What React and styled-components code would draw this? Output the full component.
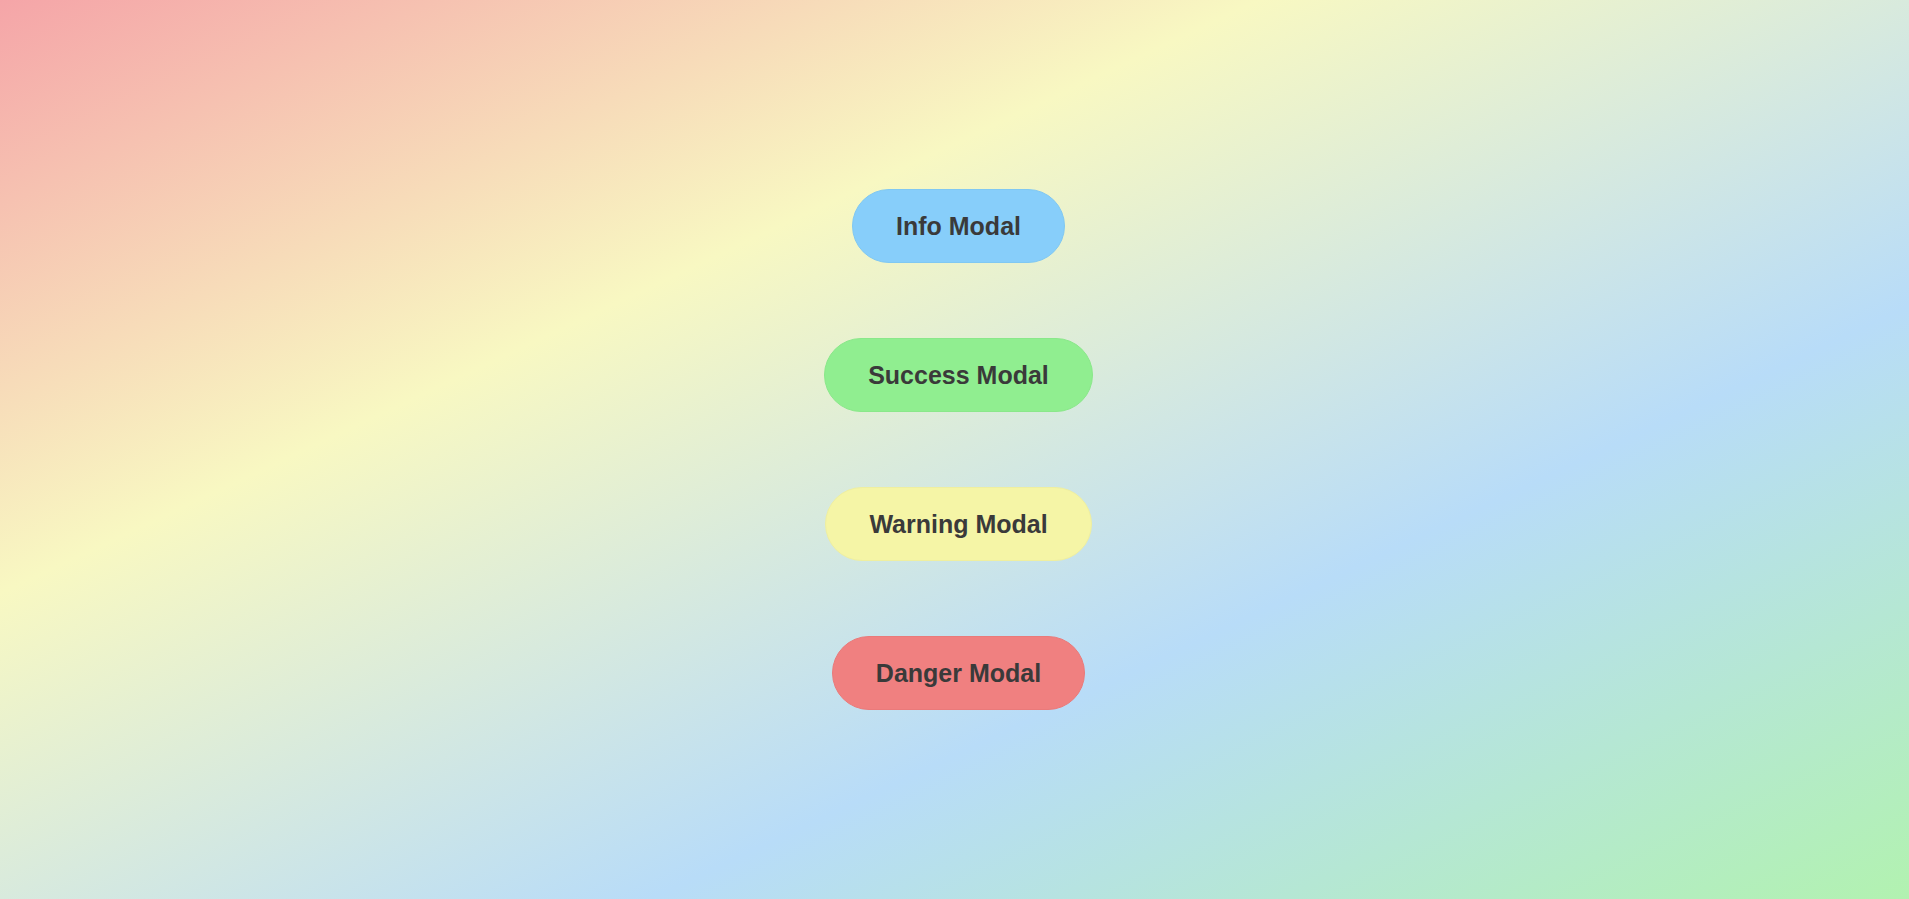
import React from "react"
import styled, { createGlobalStyle } from "styled-components"

const GlobalStyle = createGlobalStyle`
  html, body {
    margin: 0;
    padding: 0;
    height: 100%;
  }
  body {
    font-family: "Liberation Sans", Arial, sans-serif;
  }
`

const buttons = [
  { label: "Info Modal", color: "#87cefa", edge: "#80c8f2" },
  { label: "Success Modal", color: "#90ee90", edge: "#8ae88a" },
  { label: "Warning Modal", color: "#f5f5a6", edge: "#efefa0" },
  { label: "Danger Modal", color: "#f08080", edge: "#ea7a7a" },
]

const App = () => (
  <>
    <GlobalStyle />
    <Page>
      <ButtonStack>
        {buttons.map(b => (
          <ModalButton key={b.label} $color={b.color} $edge={b.edge}>
            {b.label}
          </ModalButton>
        ))}
      </ButtonStack>
    </Page>
  </>
)

export default App

const Page = styled.div`
  min-height: 100vh;
  display: flex;
  align-items: center;
  justify-content: center;
  padding-left: 8px;
  box-sizing: border-box;
  background: linear-gradient(
    to bottom right,
    #f5a5a8 0%,
    #f8f8c2 33%,
    #b8dcf8 67%,
    #b2f2b0 100%
  );
`

const ButtonStack = styled.div`
  display: flex;
  flex-direction: column;
  align-items: center;
  gap: 75px;
`

const ModalButton = styled.button`
  font-family: "Liberation Sans", Arial, sans-serif;
  font-size: 25px;
  font-weight: 700;
  line-height: 28px;
  color: #3a3a3a;
  background: ${props => props.$color};
  border: 1px solid ${props => props.$edge};
  border-radius: 40px;
  padding: 22px 43px;
  cursor: pointer;
`
